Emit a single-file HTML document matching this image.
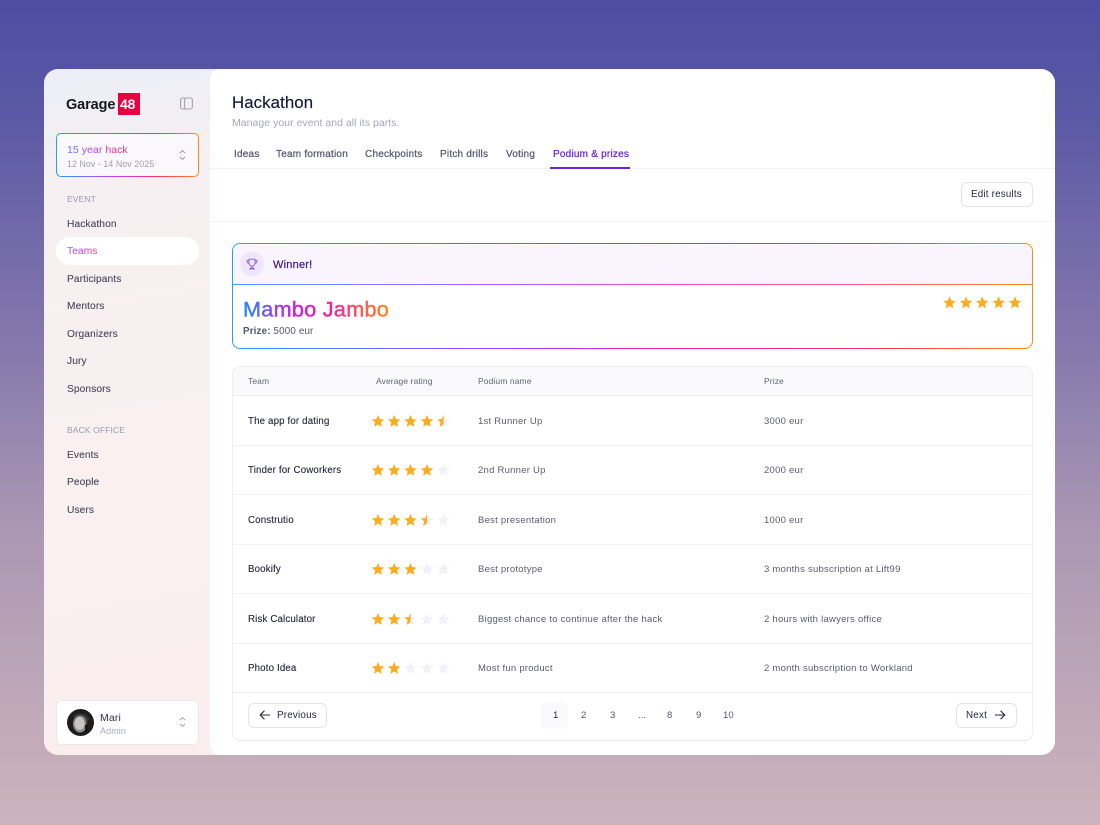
<!DOCTYPE html>
<html><head><meta charset="utf-8"><style>
html,body{margin:0;padding:0}
body{width:1100px;height:825px;position:relative;overflow:hidden;background:linear-gradient(180deg,#4d4ea3 0%,#5c5aa5 15%,#8678ad 42%,#ac98b4 65%,#cdb3bc 100%);font-family:"Liberation Sans",sans-serif;color:#1d1d35}
.a{position:absolute;box-sizing:border-box}
.t{position:absolute;white-space:nowrap;line-height:14px;font-size:10px;letter-spacing:.12px;margin-top:1px}
.nav{font-size:10.2px;color:#4a4a5e;letter-spacing:.1px;-webkit-text-stroke:.12px}
.sec{font-size:8.5px;color:#9a9aae}
.tab{font-size:10px;color:#5a5a74;letter-spacing:.22px;-webkit-text-stroke:.25px}
.h{font-size:8.5px;color:#62627a;letter-spacing:.1px}
.nm{font-size:9.7px;color:#26263c;letter-spacing:.16px;-webkit-text-stroke:.12px}
.c{font-size:9.5px;color:#5c5c70;letter-spacing:.25px}
.pg{font-size:9.5px;color:#55556a}
.ln{position:absolute;height:1px;background:#f1f1f7}
svg{position:absolute;overflow:visible}
.grad{background:linear-gradient(90deg,#3d8bff,#b23cff 30%,#ee1faa 55%,#f5325a 78%,#ff8a1a);-webkit-background-clip:text;background-clip:text;color:transparent}
</style></head><body>
<svg width="0" height="0" style="position:absolute"><defs>
<path id="s" d="M0-6.6 1.75-2.4 6.3-2.04 2.85.9 3.88 5.34 0 3 -3.88 5.34-2.85.9-6.3-2.04-1.75-2.4Z"/>
<clipPath id="hc"><rect x="-8" y="-8" width="8" height="16"/></clipPath>
<linearGradient id="mj" gradientUnits="userSpaceOnUse" x1="243" y1="0" x2="389" y2="0"><stop offset="0" stop-color="#1f8fff"/><stop offset=".33" stop-color="#c81fe8"/><stop offset=".6" stop-color="#f0209a"/><stop offset="1" stop-color="#ff8a1a"/></linearGradient>
</defs></svg>

<div class="a" style="left:44px;top:69px;width:1011px;height:686px;border-radius:14px;overflow:hidden;background:linear-gradient(170deg,#eceef7 0%,#f6f0f2 14%,#f9f0ef 45%,#faeeee 100%)">
  <div class="a" style="left:166px;top:0;width:845px;height:686px;background:#fff;border-radius:10px 0 0 10px"></div>
</div>

<!-- logo -->
<div class="t" style="left:66px;top:97px;font-size:14.5px;font-weight:bold;color:#17171f;letter-spacing:-.1px">Garage</div>
<div class="a" style="left:118px;top:93px;width:22px;height:22px;background:#e9003f"></div>
<div class="t" style="left:120px;top:96px;font-size:14px;font-weight:bold;color:#fff;letter-spacing:-.2px">48</div>
<svg style="left:180px;top:97px" width="13" height="13" viewBox="0 0 13 13" fill="none" stroke="#a3a3b8" stroke-width="1.1"><rect x=".6" y="1" width="11.8" height="11" rx="2"/><path d="M4.6 1V12"/></svg>

<!-- event selector -->
<div class="a" style="left:56px;top:133px;width:143px;height:44px;border-radius:5px;border:1.5px solid transparent;background:linear-gradient(#faf8fa,#faf8fa) padding-box,linear-gradient(90deg,#1fa2ff,#c040ff 40%,#f5326a 70%,#ff8a1a) border-box"></div>
<div class="t grad" style="left:67px;top:142px;font-size:10.5px;letter-spacing:.05px;background-image:linear-gradient(90deg,#4d80ff,#c23cf0 45%,#f5325a)">15 year hack</div>
<div class="t" style="left:67px;top:156px;font-size:8.8px;color:#9d9db0;letter-spacing:.08px">12 Nov - 14 Nov 2025</div>
<svg style="left:178px;top:149px" width="9" height="12" viewBox="0 0 9 12" fill="none" stroke="#9a9aae" stroke-width="1"><path d="M1.8 4.2 4.5 1.6 7.2 4.2M1.8 7.8 4.5 10.4 7.2 7.8"/></svg>

<!-- nav -->
<div class="t sec" style="left:67px;top:191px">EVENT</div>
<div class="t nav" style="left:67px;top:217px">Hackathon</div>
<div class="a" style="left:56px;top:237px;width:143px;height:28px;border-radius:14px;background:#fff"></div>
<div class="t nav grad" style="left:67px;top:244px;background-image:linear-gradient(90deg,#7d7dff,#d04ce0 50%,#f7506a)">Teams</div>
<div class="t nav" style="left:67px;top:272px">Participants</div>
<div class="t nav" style="left:67px;top:299px">Mentors</div>
<div class="t nav" style="left:67px;top:327px">Organizers</div>
<div class="t nav" style="left:67px;top:354px">Jury</div>
<div class="t nav" style="left:67px;top:382px">Sponsors</div>
<div class="t sec" style="left:67px;top:422px">BACK OFFICE</div>
<div class="t nav" style="left:67px;top:448px">Events</div>
<div class="t nav" style="left:67px;top:475px">People</div>
<div class="t nav" style="left:67px;top:503px">Users</div>

<!-- user -->
<div class="a" style="left:56px;top:700px;width:143px;height:45px;border-radius:5px;background:#fff;border:1px solid #e8e6ee"></div>
<svg style="left:67px;top:709px" width="27" height="27" viewBox="0 0 27 27"><circle cx="13.5" cy="13.5" r="13.5" fill="#1e1c1c"/><ellipse cx="13" cy="15" rx="7" ry="8.5" fill="#8e8a8a"/><ellipse cx="12.5" cy="14.5" rx="5" ry="6.5" fill="#c8c4c4"/><path d="M6 11C8 7 14 5 17 8 19 10 19 13 19.5 16L22 10C20 4 11 3 7 6.5Z" fill="#3a3838"/><path d="M18 16.5 20 15 20 22 18.5 23Z" fill="#0c0c0c"/></svg>
<div class="t" style="left:100px;top:710px;font-size:10.5px;color:#2e2e44">Mari</div>
<div class="t" style="left:100px;top:723px;font-size:9px;color:#a9a9bc;letter-spacing:.1px">Admin</div>
<svg style="left:178px;top:716px" width="9" height="12" viewBox="0 0 9 12" fill="none" stroke="#a6a6b8" stroke-width="1"><path d="M1.8 4.2 4.5 1.6 7.2 4.2M1.8 7.8 4.5 10.4 7.2 7.8"/></svg>

<!-- header -->
<div class="t" style="left:232px;top:93px;font-size:16.8px;line-height:18px;color:#16163a;letter-spacing:.1px;-webkit-text-stroke:.15px">Hackathon</div>
<div class="t" style="left:232px;top:115px;font-size:10.5px;color:#a6a6ba;letter-spacing:.03px">Manage your event and all its parts.</div>
<div class="t tab" style="left:234px;top:147px">Ideas</div>
<div class="t tab" style="left:276px;top:147px">Team formation</div>
<div class="t tab" style="left:365px;top:147px">Checkpoints</div>
<div class="t tab" style="left:440px;top:147px">Pitch drills</div>
<div class="t tab" style="left:506px;top:147px">Voting</div>
<div class="t tab" style="left:553px;top:147px;color:#6a25dc">Podium &amp; prizes</div>
<div class="a" style="left:210px;top:168px;width:845px;height:1px;background:#f1f1f6"></div>
<div class="a" style="left:550px;top:167px;width:80px;height:1.5px;background:#6a25dc"></div>

<div class="a" style="left:961px;top:182px;width:72px;height:25px;border-radius:6px;background:#fff;border:1px solid #e3e3ee"></div>
<div class="t" style="left:971px;top:187px;font-size:9.8px;color:#26263e;letter-spacing:.2px">Edit results</div>
<div class="a" style="left:210px;top:221px;width:845px;height:1px;background:#f3f3f8"></div>

<!-- winner -->
<div class="a" style="left:232px;top:243px;width:801px;height:106px;border-radius:8px;border:1.5px solid transparent;background:linear-gradient(#fff,#fff) padding-box,linear-gradient(90deg,#1fa2ff,#a040ff 32%,#e81fc0 55%,#f5325a 80%,#ff8a1a) border-box"></div>
<div class="a" style="left:233.5px;top:244.5px;width:798px;height:39px;border-radius:7px 7px 0 0;background:#faf4fe"></div>
<div class="a" style="left:233px;top:283.5px;width:799px;height:1.5px;background:linear-gradient(90deg,#4a9cff,#b05cff 32%,#ec4ccd 55%,#f7607c 80%,#ff8a1a)"></div>
<div class="a" style="left:240px;top:252px;width:24px;height:24px;border-radius:50%;background:#efe6fb"></div>
<svg style="left:246px;top:258px" width="12" height="12" viewBox="0 0 12 12" fill="none" stroke="#8a5bd6" stroke-width=".9"><path d="M3 1.2H9V5C9 6.8 7.7 8 6 8S3 6.8 3 5ZM3 2.4H.9C.9 4.2 1.8 5.2 3.1 5.4M9 2.4H11.1C11.1 4.2 10.2 5.2 8.9 5.4M6 8V9.8M3.8 11H8.2C8 10.2 7.2 9.8 6 9.8S4 10.2 3.8 11Z"/></svg>
<div class="t" style="left:273px;top:257px;font-size:11px;color:#3a1a8a;letter-spacing:.22px;-webkit-text-stroke:.2px">Winner!</div>
<svg style="left:0;top:0" width="1100" height="825"><text x="243" y="316.5" font-family="Liberation Sans, sans-serif" font-size="21.6" letter-spacing=".3" fill="url(#mj)" stroke="url(#mj)" stroke-width=".45">Mambo Jambo</text></svg>
<div class="t" style="left:243px;top:324px;font-size:9.8px;color:#55556a;letter-spacing:.16px"><b>Prize:</b> 5000 eur</div>
<svg style="left:0;top:0" width="1100" height="825" fill="#fdab1f">
<use href="#s" x="949.5" y="303"/><use href="#s" x="966" y="303"/><use href="#s" x="982.2" y="303"/><use href="#s" x="998.7" y="303"/><use href="#s" x="1015" y="303"/>
</svg>

<!-- table -->
<div class="a" style="left:232px;top:366px;width:801px;height:375px;border-radius:8px;background:#fff;border:1px solid #eeeef4;border-bottom:1.5px solid #e6e6ee;overflow:hidden">
  <div class="a" style="left:0;top:0;width:100%;height:29px;background:#fafafd"></div>
</div>
<div class="ln" style="left:233px;right:68px;top:395px;background:#eeeef5"></div>
<div class="ln" style="left:233px;right:68px;top:445px"></div>
<div class="ln" style="left:233px;right:68px;top:494px"></div>
<div class="ln" style="left:233px;right:68px;top:544px"></div>
<div class="ln" style="left:233px;right:68px;top:593px"></div>
<div class="ln" style="left:233px;right:68px;top:643px"></div>
<div class="ln" style="left:233px;right:68px;top:692px;background:#eeeef5"></div>

<div class="t h" style="left:248px;top:373px">Team</div>
<div class="t h" style="left:376px;top:373px">Average rating</div>
<div class="t h" style="left:478px;top:373px">Podium name</div>
<div class="t h" style="left:764px;top:373px">Prize</div>

<div class="t nm" style="left:248px;top:414px">The app for dating</div>
<div class="t c" style="left:478px;top:414px">1st Runner Up</div>
<div class="t c" style="left:764px;top:414px">3000 eur</div>

<div class="t nm" style="left:248px;top:463px">Tinder for Coworkers</div>
<div class="t c" style="left:478px;top:463px">2nd Runner Up</div>
<div class="t c" style="left:764px;top:463px">2000 eur</div>

<div class="t nm" style="left:248px;top:513px">Construtio</div>
<div class="t c" style="left:478px;top:513px">Best presentation</div>
<div class="t c" style="left:764px;top:513px">1000 eur</div>

<div class="t nm" style="left:248px;top:562px">Bookify</div>
<div class="t c" style="left:478px;top:562px">Best prototype</div>
<div class="t c" style="left:764px;top:562px">3 months subscription at Lift99</div>

<div class="t nm" style="left:248px;top:612px">Risk Calculator</div>
<div class="t c" style="left:478px;top:612px">Biggest chance to continue after the hack</div>
<div class="t c" style="left:764px;top:612px">2 hours with lawyers office</div>

<div class="t nm" style="left:248px;top:661px">Photo Idea</div>
<div class="t c" style="left:478px;top:661px">Most fun product</div>
<div class="t c" style="left:764px;top:661px">2 month subscription to Workland</div>

<svg style="left:0;top:0" width="1100" height="825">
<g fill="#f1f1f7">
<use href="#s" x="443.5" y="421.5"/>
<use href="#s" x="443.5" y="470.5"/>
<use href="#s" x="443.5" y="520.5"/>
<use href="#s" x="427" y="569.5"/><use href="#s" x="443.5" y="569.5"/>
<use href="#s" x="427" y="619.5"/><use href="#s" x="443.5" y="619.5"/><use href="#s" x="410.5" y="619.5"/>
<use href="#s" x="410.5" y="668.5"/><use href="#s" x="427" y="668.5"/><use href="#s" x="443.5" y="668.5"/>
<use href="#s" x="427" y="520.5"/>
</g>
<g fill="#fdab1f">
<use href="#s" x="378" y="421.5"/><use href="#s" x="394.2" y="421.5"/><use href="#s" x="410.5" y="421.5"/><use href="#s" x="427" y="421.5"/>
<g transform="translate(443.5 421.5)" clip-path="url(#hc)"><use href="#s"/></g>
<use href="#s" x="378" y="470.5"/><use href="#s" x="394.2" y="470.5"/><use href="#s" x="410.5" y="470.5"/><use href="#s" x="427" y="470.5"/>
<use href="#s" x="378" y="520.5"/><use href="#s" x="394.2" y="520.5"/><use href="#s" x="410.5" y="520.5"/>
<g transform="translate(427 520.5)" clip-path="url(#hc)"><use href="#s"/></g>
<use href="#s" x="378" y="569.5"/><use href="#s" x="394.2" y="569.5"/><use href="#s" x="410.5" y="569.5"/>
<use href="#s" x="378" y="619.5"/><use href="#s" x="394.2" y="619.5"/>
<g transform="translate(410.5 619.5)" clip-path="url(#hc)"><use href="#s"/></g>
<use href="#s" x="378" y="668.5"/><use href="#s" x="394.2" y="668.5"/>
</g>
</svg>

<!-- pagination -->
<div class="a" style="left:248px;top:703px;width:79px;height:25px;border-radius:6px;background:#fff;border:1px solid #e3e3ee"></div>
<svg style="left:259px;top:709px" width="12" height="12" viewBox="0 0 12 12" fill="none" stroke="#2a2a42" stroke-width="1.1"><path d="M11 6H1.4M5.4 1.8 1.2 6 5.4 10.2"/></svg>
<div class="t" style="left:277px;top:708px;font-size:9.8px;color:#26263e;letter-spacing:.22px">Previous</div>
<div class="a" style="left:541px;top:702px;width:27px;height:27px;border-radius:6px;background:#fafafd"></div>
<div class="t pg" style="left:553px;top:708px;color:#26263e">1</div>
<div class="t pg" style="left:581px;top:708px">2</div>
<div class="t pg" style="left:610px;top:708px">3</div>
<div class="t pg" style="left:638px;top:708px">...</div>
<div class="t pg" style="left:667px;top:708px">8</div>
<div class="t pg" style="left:696px;top:708px">9</div>
<div class="t pg" style="left:723px;top:708px">10</div>
<div class="a" style="left:956px;top:703px;width:61px;height:25px;border-radius:6px;background:#fff;border:1px solid #e3e3ee"></div>
<div class="t" style="left:966px;top:708px;font-size:9.8px;color:#26263e;letter-spacing:.22px">Next</div>
<svg style="left:994px;top:709px" width="12" height="12" viewBox="0 0 12 12" fill="none" stroke="#2a2a42" stroke-width="1.1"><path d="M1 6H10.6M6.6 1.8 10.8 6 6.6 10.2"/></svg>
</body></html>
